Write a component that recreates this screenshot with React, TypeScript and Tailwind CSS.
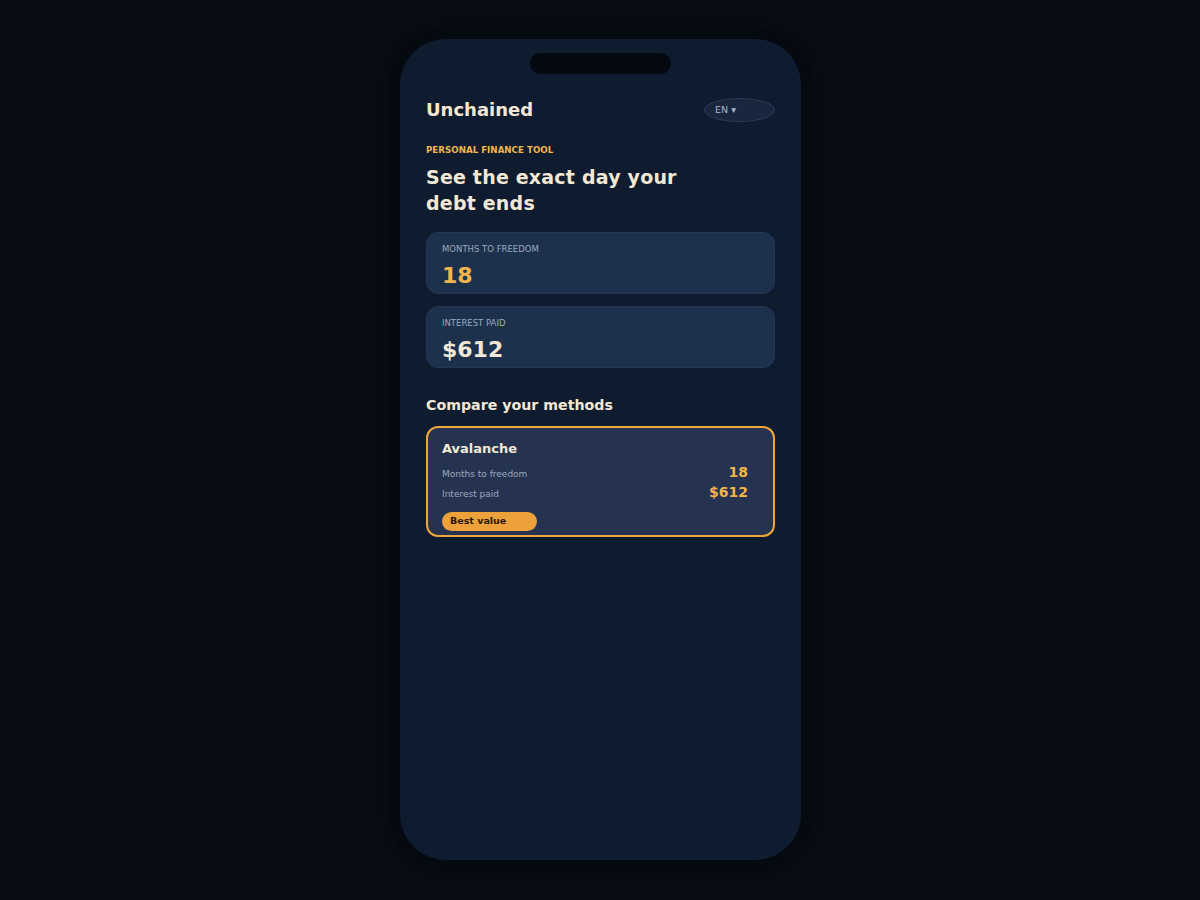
export default function App() {
  return (
    <div className="min-h-[900px] w-full bg-[#080c14] flex justify-center pl-[2px] pt-[30px] font-['DejaVu_Sans',sans-serif]">
      <div className="w-[420px] h-[840px] rounded-[56px] bg-[#050910] p-[9px] shadow-[0_0_14px_rgba(0,0,0,0.4)]">
        <div className="w-[401px] h-[821px] rounded-[46px] bg-[#0f1c30] flex flex-col overflow-hidden">
          <div className="flex justify-center pt-[14px]">
            <div className="w-[141px] h-[21px] rounded-full bg-[#04080f]" />
          </div>

          <div className="px-[26px] pt-[22px] flex flex-col">
            <div className="flex items-center justify-between">
              <h1 className="text-[18px] leading-[28px] font-bold text-[#f3e8d4]">Unchained</h1>
              <div className="w-[71px] h-[24px] rounded-[50%] border border-[#2b3d58] bg-[#18273e] flex items-center pl-[10px] text-[9.5px] text-[#a9b6c9]">
                EN ▾
              </div>
            </div>

            <div className="mt-[19px] text-[8.7px] leading-[14px] font-bold text-[#f2b54c]">PERSONAL FINANCE TOOL</div>
            <h2 className="mt-[7px] max-w-[280px] text-[19px] leading-[26px] font-bold text-[#f3e8d4] tracking-[0.2px]">
              See the exact day your debt ends
            </h2>

            <div className="mt-[16px] flex flex-col gap-[12px]">
              <div className="h-[62px] rounded-[12px] bg-[#1d314d] px-[15px] pt-[10px] border border-[#213755]">
                <div className="text-[8.5px] leading-[12px] text-[#9aa9bf]">MONTHS TO FREEDOM</div>
                <div className="mt-[7px] text-[22px] leading-[28px] font-bold text-[#f2b54c]">18</div>
              </div>
              <div className="h-[62px] rounded-[12px] bg-[#1d314d] px-[15px] pt-[10px] border border-[#213755]">
                <div className="text-[8.5px] leading-[12px] text-[#9aa9bf]">INTEREST PAID</div>
                <div className="mt-[7px] text-[22px] leading-[28px] font-bold text-[#f3e8d4]">$612</div>
              </div>
            </div>

            <h3 className="mt-[27px] text-[14.2px] leading-[20px] font-bold text-[#f3e8d4]">Compare your methods</h3>

            <div className="mt-[11px] h-[111px] rounded-[12px] border-2 border-[#eea63a] bg-[#263350] pl-[14px] pr-[25px] pt-[11px]">
              <div className="text-[13px] leading-[20px] font-bold text-[#f3e8d4]">Avalanche</div>
              <div className="mt-[3px] flex items-baseline justify-between h-[20px]">
                <span className="text-[9px] text-[#9aa9bf]">Months to freedom</span>
                <span className="text-[14px] font-bold text-[#f2b54c]">18</span>
              </div>
              <div className="flex items-baseline justify-between h-[20px]">
                <span className="text-[9px] text-[#9aa9bf]">Interest paid</span>
                <span className="text-[14px] font-bold text-[#f2b54c]">$612</span>
              </div>
              <div className="mt-[10px] w-[95px] h-[19px] rounded-full bg-[#eca13a] flex items-center pl-[8px] text-[9.5px] font-bold text-[#2a1705]">
                Best value
              </div>
            </div>
          </div>
        </div>
      </div>
    </div>
  );
}
